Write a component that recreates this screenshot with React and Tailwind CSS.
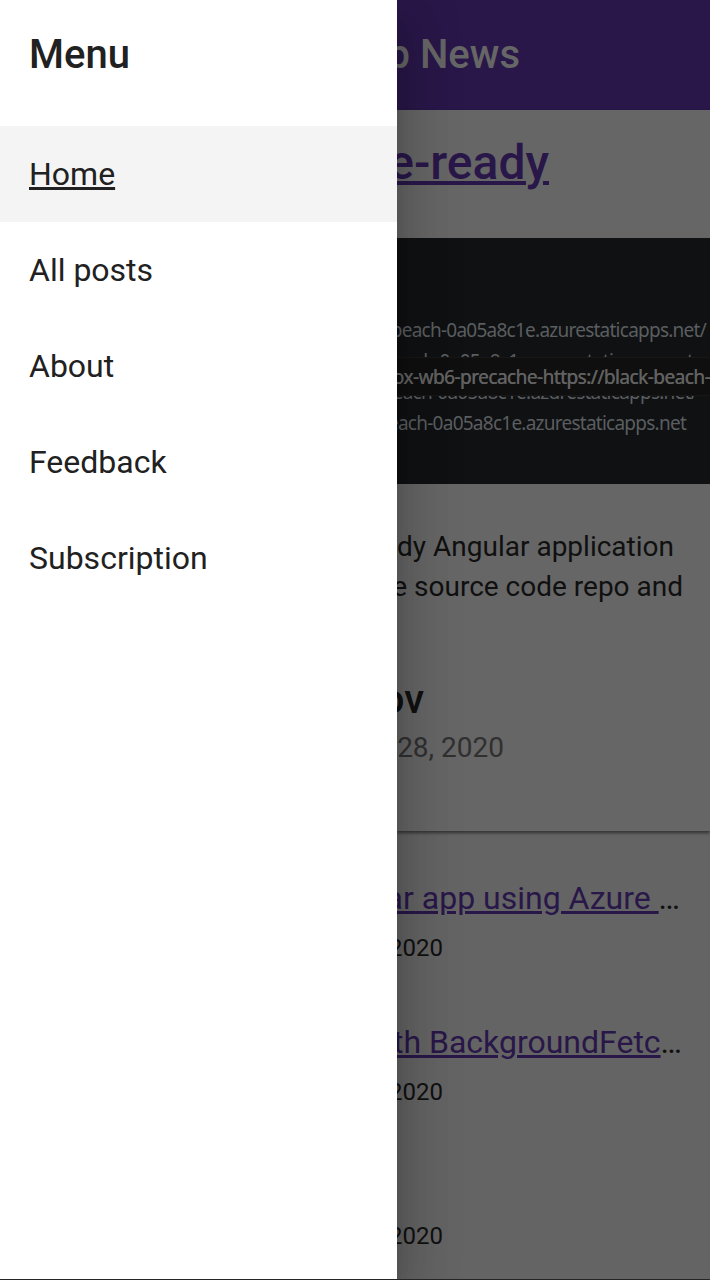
const links = ['Home', 'All posts', 'About', 'Feedback', 'Subscription'];

function Drawer() {
  return (
    <nav className="relative z-10 w-[397px] shrink-0 bg-white text-[#212121] shadow-[0_16px_20px_-10px_rgba(0,0,0,0.2),0_32px_48px_4px_rgba(0,0,0,0.14),0_12px_60px_10px_rgba(0,0,0,0.12)]">
      <h2 className="flex h-[110px] items-center pl-[29px] text-[40px] font-medium">Menu</h2>
      <ul className="pt-4">
        {links.map((label, i) => (
          <li key={label} className={i === 0 ? 'bg-[#f4f4f4]' : ''}>
            <a className={i === 0 ? 'flex h-24 items-center pl-[29px] text-[32px] underline decoration-[3px]' : 'flex h-24 items-center pl-[29px] text-[32px]'}>
              {label}
            </a>
          </li>
        ))}
      </ul>
    </nav>
  );
}

function CacheList() {
  return (
    <div className="relative h-[246px] overflow-hidden whitespace-nowrap bg-[#101113] pt-[77px] font-['Noto_Sans',sans-serif] text-[19px] leading-[31px] tracking-[-0.75px] text-[#5a5e60]">
      <div className="flex justify-end pr-[4px]">beach-0a05a8c1e.azurestaticapps.net/</div>
      <div className="flex justify-end pr-[17px]">beach-0a05a8c1e.azurestaticapps.net</div>
      <div className="flex justify-end pr-[13px]">beach-0a05a8c1e.azurestaticapps.net/</div>
      <div className="flex justify-end pr-[24px]">beach-0a05a8c1e.azurestaticapps.net</div>
      <div className="absolute inset-x-0 top-[119px] flex h-[39px] items-center justify-end border-y border-[#171717] bg-[#0f0f0f] pt-[2px] tracking-[-0.53px] text-[#616161] [text-shadow:0.4px_0_0_#616161]">
        ox-wb6-precache-https://black-beach-
      </div>
    </div>
  );
}

function Post({ title, pad }) {
  return (
    <li className="h-36 pt-[29px]">
      <div className={`flex h-12 items-center justify-end text-[32px] ${pad}`}>
        {title && (
          <span className="whitespace-pre">
            <a className="text-[#291749] underline decoration-[3px]">{title}</a>…
          </span>
        )}
      </div>
      <div className="mt-2 flex h-9 items-center justify-end pr-[267px] text-[24px]">2020</div>
    </li>
  );
}

export default function App() {
  return (
    <div className="flex h-[1280px] w-[710px] flex-col overflow-hidden bg-[#646464] font-[Roboto,sans-serif]">
      <div className="flex h-[1279px] overflow-hidden">
        <Drawer />
        <main className="min-w-0 flex-1 overflow-hidden whitespace-nowrap text-[#101010]">
          <header className="flex h-[110px] items-center justify-end bg-[#291749] pr-[190px] text-[40px] font-medium text-[#666666]">p News</header>
          <article className="h-[721px] bg-[#666666] shadow-[0_2px_3px_rgba(0,0,0,0.5)]">
            <h1 className="flex h-[128px] items-start justify-end pr-[161px] pt-[21px] text-[48px] font-medium leading-[64px] text-[#291749] underline decoration-[4px]">e-ready</h1>
            <CacheList />
            <div className="pt-[43px] text-[28px] leading-10">
              <p className="flex justify-end pr-[36px]">dy Angular application</p>
              <p className="flex justify-end pr-[27px]">e source code repo and</p>
            </div>
            <h2 className="mt-[69px] flex h-12 items-center justify-end pr-[286px] text-[40px] font-medium">ov</h2>
            <p className="mt-1 flex h-10 items-center justify-end pr-[206px] text-[28px] text-[#303030]">28, 2020</p>
          </article>
          <ul className="pt-[14px]">
            <Post title="ar app using Azure " pad="pr-[30px]" />
            <Post title="th BackgroundFetc" pad="pr-[28px]" />
            <Post pad="" />
          </ul>
        </main>
      </div>
      <div className="h-px bg-[#252527]" />
    </div>
  );
}
